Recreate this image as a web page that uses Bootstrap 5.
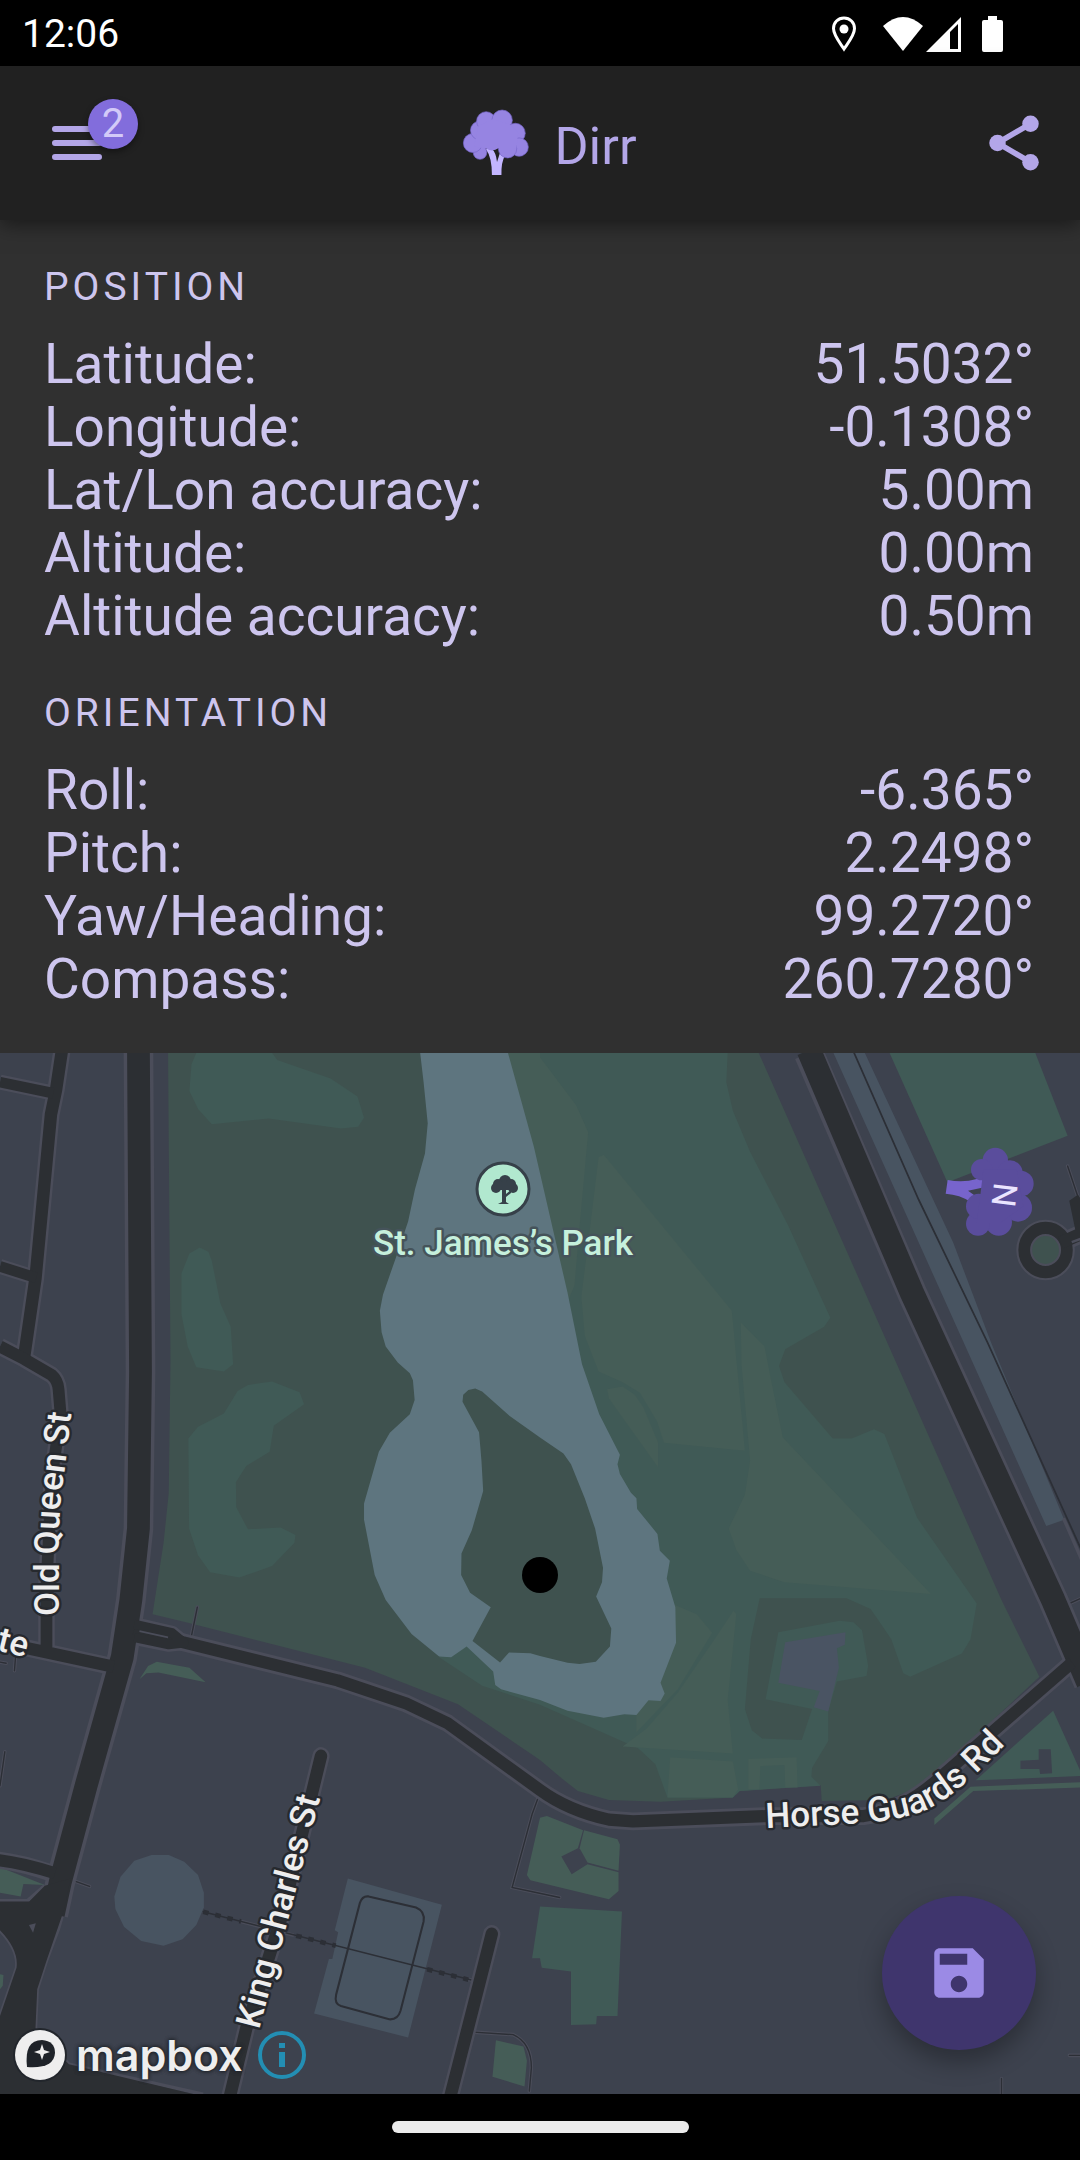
<!DOCTYPE html>
<html lang="en">
<head>
<meta charset="utf-8">
<meta name="viewport" content="width=device-width, initial-scale=1">
<title>Dirr</title>
<link href="https://cdn.jsdelivr.net/npm/bootstrap@5.3.0/dist/css/bootstrap.min.css" rel="stylesheet">
<style>
  body { background: #303030; color: #cdc5ee; font-family: Roboto, "Liberation Sans", sans-serif; }
  .status-strip { height: 66px; padding: 2px 76px 0 22px; background: #000; color: #fff; font-size: 39px; line-height: 48px; }
  .app-bar { height: 154px; padding: 0 33px 0 44px; background: #212121; box-shadow: 0 4px 20px rgba(0,0,0,.5); z-index: 2; }
  .bar-btn { width: 66px; height: 66px; color: #b3a6e8; border: 0; background: none; }
  .brand-name { font-size: 52px; line-height: 56px; color: #b3a6e8; }
  .count-badge { left: 44px; top: -11px; width: 50px; height: 50px; border-radius: 50%; background: #826ddc; color: #d3caf8; font-size: 40px; line-height: 50px; box-shadow: 0 3px 6px rgba(0,0,0,.4); }
  .readout { padding: 44px 46px 42px 44px; }
  .readout h2 { font-size: 39px; line-height: 46px; font-weight: 400; letter-spacing: 4px; margin: 0 0 23px; text-transform: uppercase; }
  .readout dl { font-size: 55px; line-height: 63px; margin: 0; }
  .readout dl + h2 { margin-top: 42px; }
  .readout dt { font-weight: 400; }
  .map-area { min-height: 600px; background: #3d424e; }
  .map-svg { position: absolute; inset: 0; width: 100%; height: 100%; }
  .compass-btn { top: 90px; right: 40px; width: 100px; height: 100px; border: 0; background: none; }
  .save-btn { right: 44px; bottom: 44px; width: 154px; height: 154px; border: 0; border-radius: 50%; background: #3f356d; color: #9b8ae5; box-shadow: 0 12px 24px rgba(0,0,0,.3); }
  .map-credit { left: 12px; bottom: 11px; gap: 14px; }
  .credit-link { color: #eee; font: 600 43px/56px Inter, sans-serif; text-shadow: 0 0 4px #22262c, 0 0 4px #22262c, 0 0 3px #22262c; }
  .home-strip { height: 66px; background: #000; }
  .home-pill { width: 297px; height: 12px; border-radius: 6px; background: #ebebeb; }
  .casing path { stroke: #4b4d5a; fill: none; stroke-linejoin: round; }
  .asphalt path { stroke: #2c2f33; fill: none; stroke-linejoin: round; }
  .street-name { font: 500 35px Roboto, sans-serif; fill: #eee; stroke: #26292e; stroke-width: 5px; paint-order: stroke; stroke-linejoin: round; }
  .park-name { fill: #c6f0dc; stroke: #45535a; }
</style>
<script src="https://cdn.jsdelivr.net/npm/bootstrap@5.3.0/dist/js/bootstrap.bundle.min.js" defer></script>
</head>
<body>
<div class="d-flex flex-column min-vh-100">

  <div class="status-strip d-flex align-items-center justify-content-between">
    <span>12:06</span>
    <span class="d-flex align-items-center">
      <svg width="26" height="36" viewBox="0 0 26 36" aria-hidden="true"><path d="M13 2C7 2 2.500 6.500 2.500 12.500C2.500 19 8 25.500 13 33C18 25.500 23.500 19 23.500 12.500C23.500 6.500 19 2 13 2Z" fill="none" stroke="#fff" stroke-width="3"/><circle cx="13" cy="13" r="4.500" fill="#fff"/></svg>
      <svg class="ms-4" width="44" height="36" viewBox="0 0 44 36" aria-hidden="true"><path d="M2 10Q22-8 42 10L22 35Z" fill="#fff"/></svg>
      <svg width="38" height="36" viewBox="0 0 38 36" aria-hidden="true"><path fill="#fff" fill-rule="evenodd" d="M1 36L36 1V36ZM25 16V33H33V8Z"/></svg>
      <svg class="ms-3" width="25" height="38" viewBox="0 0 25 38" aria-hidden="true"><path fill="#fff" d="M9 1H18V5H22Q24 5 24 7V35Q24 37 22 37H5Q3 37 3 35V7Q3 5 5 5H9Z"/></svg>
    </span>
  </div>

  <header class="app-bar d-flex align-items-center justify-content-between position-relative">
    <button type="button" class="bar-btn p-0 position-relative" aria-label="Menu">
      <svg width="66" height="66" viewBox="0 0 66 66" aria-hidden="true"><path d="M11 19H55M11 33H55M11 47H55" stroke="currentColor" stroke-width="6" stroke-linecap="round"/></svg>
      <span class="count-badge position-absolute text-center">2</span>
    </button>
    <div class="d-flex align-items-center gap-4 ps-2">
      <svg width="68" height="68" viewBox="1350 330 200 200" aria-hidden="true">
        <path fill="#c3b5ff" d="M1420 448Q1438 472 1438 524H1466Q1465 486 1476 468L1462 458L1453 486Q1450 456 1436 446Z"/>
        <g fill="#9684e2" stroke="#7665c8" stroke-width="2"><circle cx="1403" cy="458" r="20"/><circle cx="1382" cy="430" r="28"/><circle cx="1403" cy="393" r="28"/><circle cx="1421" cy="366" r="28"/><circle cx="1468" cy="363" r="30"/><circle cx="1507" cy="401" r="29"/><circle cx="1518" cy="442" r="27"/><circle cx="1484" cy="447" r="27"/></g>
        <path fill="#9684e2" d="M1398 380L1440 360L1490 375L1515 400L1510 445L1475 458L1458 445Q1440 458 1422 447L1385 440Z"/>
      </svg>
      <span class="brand-name pt-2">Dirr</span>
    </div>
    <button type="button" class="bar-btn p-0" aria-label="Share">
      <svg width="66" height="66" viewBox="0 0 24 24" aria-hidden="true"><path d="M18 5L6 12L18 19" fill="none" stroke="currentColor" stroke-width="2"/><g fill="currentColor"><circle cx="18" cy="5" r="3"/><circle cx="6" cy="12" r="3"/><circle cx="18" cy="19" r="3"/></g></svg>
    </button>
  </header>

  <section class="readout">
    <h2>Position</h2>
    <dl>
      <div class="d-flex justify-content-between"><dt>Latitude:</dt><dd class="m-0">51.5032°</dd></div>
      <div class="d-flex justify-content-between"><dt>Longitude:</dt><dd class="m-0">-0.1308°</dd></div>
      <div class="d-flex justify-content-between"><dt>Lat/Lon accuracy:</dt><dd class="m-0">5.00m</dd></div>
      <div class="d-flex justify-content-between"><dt>Altitude:</dt><dd class="m-0">0.00m</dd></div>
      <div class="d-flex justify-content-between"><dt>Altitude accuracy:</dt><dd class="m-0">0.50m</dd></div>
    </dl>
    <h2>Orientation</h2>
    <dl>
      <div class="d-flex justify-content-between"><dt>Roll:</dt><dd class="m-0">-6.365°</dd></div>
      <div class="d-flex justify-content-between"><dt>Pitch:</dt><dd class="m-0">2.2498°</dd></div>
      <div class="d-flex justify-content-between"><dt>Yaw/Heading:</dt><dd class="m-0">99.2720°</dd></div>
      <div class="d-flex justify-content-between"><dt>Compass:</dt><dd class="m-0">260.7280°</dd></div>
    </dl>
  </section>

  <main class="map-area flex-grow-1 position-relative overflow-hidden">
    <svg class="map-svg" viewBox="0 1053 1080 1041" preserveAspectRatio="xMidYMid slice" role="img" aria-label="Map of St. James's Park">
      <g transform="translate(0 1050) scale(.34439 .35714)">
        <!-- park ground -->
        <path fill="#3f524f" d="M488 8L495 870L490 1240L475 1380L443 1580L540 1602L1060 1730L1330 1832L1568 1988L1638 2045L1678 2075L1768 2100L1918 2105L2128 2093L2148 2075L2383 2058L2386 2103L2570 2100L2658 2070L2768 1980L3018 1755L2908 1540L2203 8Z"/>
        <!-- woodland -->
        <g fill="#405a56">
          <path d="M570 8H790L805 28L960 80L1038 130L1057 190L1040 215L990 220L780 192L615 208L575 165L550 115L556 40Z"/>
          <path d="M580 553L605 565L615 590L640 710L670 775L677 880L650 900L570 888L545 830L527 740V625L550 570Z"/>
          <path d="M720 938L790 928L870 958L883 992L795 1052L783 1125L715 1165L685 1210L686 1280L720 1342L815 1337L858 1358L855 1380L790 1445L695 1477L610 1462L575 1415L549 1340L547 1088L575 1055L650 1018L690 955Z"/>
          <path d="M1475 8H2113L2109 90L2128 170L2178 285L2288 490L2411 750L2393 775L2280 838L2262 885L2278 930L2418 1088H2473L2538 1062L2568 1075L2663 1310L2836 1550L2818 1650L2793 1690L2643 1755L2623 1745L2588 1650L2553 1600L2528 1565L2458 1535H2206L2180 1650L2163 1845L2183 1905L2213 1928L2328 1932L2358 1845L2223 1818L2260 1630L2438 1598L2478 1602L2503 1625L2521 1725L2516 1753L2430 1768L2405 1850V1935L2358 2010L2356 2035L2383 2060L2148 2075L2128 2093H1938L1903 2000L1853 1955L1568 1833L1400 1780L1275 1700L1600 1400Z"/>
          <path d="M2583 8H3006L3100 240L2751 370Z"/>
          <path d="M3058 1850L3140 2025V2033L2833 2045Z"/>
          <path d="M1568 2398L1806 2412L1793 2705H1733L1731 2728L1658 2730V2580L1573 2570L1568 2543H1545Z"/>
        </g>
        <!-- grass -->
        <g fill="#455d57">
          <path d="M1475 8H1568V20L1673 155L1708 230L1688 440L1668 660L1650 700L1568 500Z"/>
          <path d="M1738 300L1753 293L1938 510L2125 730L2163 1122L1928 1100L1908 1040L1858 960L1808 930L1738 900L1698 800L1688 690L1713 500Z"/>
          <path d="M2151 763L2220 830L2238 920L2273 1085L2703 1523L2278 1490L2178 1458L2138 1400L2116 1340L2163 1245L2178 1150L2153 880Z"/>
          <path d="M1763 950L1808 942L1843 965L1868 1000L1911 1100V1168L1808 1030L1768 975Z"/>
          <path d="M1950 1550L2023 1580L2068 1632L1968 1790L1848 1910V1860Z"/>
          <path d="M2130 1570L2138 1580L2113 1820L2128 1970L1808 1950L1878 1900L1968 1800L2068 1660Z"/>
          <path d="M1946 1980L2128 1992L2143 2070L2128 2093H1938Z"/>
          <path d="M2173 1985L2313 1980L2316 2065H2280L2278 2002L2208 2005L2205 2070H2173Z"/>
          <path d="M1530 2310L1568 2150L1588 2145L1693 2185L1678 2235L1630 2258L1660 2308L1706 2280L1796 2302V2355L1768 2378L1540 2325Z"/>
          <path d="M1696 2185L1793 2210L1800 2225L1796 2298L1706 2275L1683 2235Z"/>
          <path d="M1440 2773L1520 2790L1530 2830L1523 2902L1430 2875Z"/>
          <path d="M0 2288L130 2338L68 2335L60 2370L0 2360ZM0 2588L10 2590L8 2620L0 2630Z"/>
          <path d="M405 1762L430 1725L455 1713L550 1730L597 1770L460 1743L425 1745Z"/>
          <path d="M3140 2050V2065L2826 2075L2713 2170V2152L2818 2063Z"/>
        </g>
        <!-- buildings and paved ground -->
        <path fill="#4a5463" d="M2280 1658L2455 1630L2453 1665L2430 1675L2436 1730L2405 1852L2363 1840L2380 1795L2260 1772Z"/>
        <path fill="#3d424e" d="M2963 1990L3016 1987V1958L3051 1958L3055 2025L3020 2027L3018 2013H2963Z"/>
        <g fill="#485461">
          <path d="M2420 8H2511L2768 540L2878 820L3090 1315L3038 1333Z"/>
          <path d="M440 2254H490L535 2273L575 2310L592 2360V2400L570 2450L530 2490L475 2508L410 2495L360 2455L335 2405L332 2370L350 2315L390 2270Z"/>
          <path d="M1010 2320L1283 2393L1185 2765L912 2698L955 2545H965L982 2470L972 2465Z"/>
        </g>
        <!-- lake -->
        <path fill="#5e757f" d="M1220 8L1230 90L1242 205L1234 290L1205 390L1185 480L1150 580L1112 685L1103 730L1108 790L1120 830L1155 875L1190 905L1199 925L1204 980L1190 1020L1132 1072L1100 1125L1057 1270V1315L1088 1470L1120 1540L1195 1635L1275 1698L1310 1700L1355 1670L1432 1740L1438 1778L1455 1790L1568 1820L1648 1850L1753 1870L1813 1860L1848 1862L1883 1821L1918 1823L1930 1802L1918 1772L1963 1660L1961 1560L1936 1480L1945 1430L1916 1402L1909 1355L1850 1285L1848 1255L1832 1240L1800 1187L1793 1160L1800 1133L1740 1020L1690 880L1648 680L1568 345L1550 270L1475 8Z"/>
        <!-- island -->
        <path fill="#3f524f" d="M1343 985L1345 965L1360 952L1380 948L1400 956L1480 1025L1568 1085L1636 1130L1658 1160L1698 1255L1728 1340L1751 1450L1748 1490L1731 1530L1775 1620L1771 1670L1730 1713L1683 1719L1648 1716L1568 1697L1540 1689L1478 1687L1452 1715L1372 1655L1425 1560L1365 1520L1339 1470L1340 1410L1370 1345L1403 1235L1398 1150L1391 1070Z"/>
        <!-- footpaths -->
        <g fill="none" stroke="#4b4d5a" stroke-width="10" stroke-linecap="round">
          <path d="M573 1560L555 1645M205 2323L260 2342M14 1965L0 2060M0 1714L18 1717M45 1700L42 1738M1562 2095L1545 2140L1487 2345L1625 2373M1375 2750L1490 2757Q1543 2780 1543 2850L1537 2915M3100 325L3140 440M2908 2880V2930M3105 2815H3140M3100 1552L3140 1535M700 2440L850 2478M1350 2600L1380 2607M3090 1315L3140 1425"/>
        </g>
        <g fill="none" stroke="#2c2f36" stroke-width="4" stroke-linecap="round">
          <path d="M573 1560L555 1645M205 2323L260 2342M14 1965L0 2060M0 1714L18 1717M45 1700L42 1738M1562 2095L1545 2140L1487 2345L1625 2373M1375 2750L1490 2757Q1543 2780 1543 2850L1537 2915M3100 325L3140 440M2908 2880V2930M3105 2815H3140M3100 1552L3140 1535M590 2413L1380 2607"/>
          <path d="M2480 8L2668 420L2868 820L3140 1400" stroke-width="5"/>
          <path stroke-width="6" d="M1070 2370L1208 2401Q1235 2412 1230 2440L1163 2690Q1155 2716 1130 2714L990 2677Q970 2670 976 2645L1045 2388Q1052 2368 1070 2370Z"/>
        </g>
        <path d="M590 2413L700 2440M860 2480L975 2508M1240 2574L1360 2603" fill="none" stroke="#2c2f36" stroke-width="13" stroke-dasharray="16 20"/>
        <!-- roads: light casing first, asphalt over it -->
        <g class="casing">
          <path stroke-width="86" d="M402 0L408 900L402 1340L380 1540L355 1700L250 2060L175 2330L155 2420"/>
          <path stroke-width="86" d="M2348 8L2648 680L3058 1540L3160 1770"/>
          <path stroke-width="50" d="M400 1625L530 1658L980 1765L1180 1830L1300 1885L1568 2072Q1650 2130 1768 2155L1838 2160L2228 2145L2508 2145Q2620 2130 2720 2045L3113 1715"/>
          <path stroke-width="40" d="M400 1610L500 1632L535 1660L490 1665L400 1648"/>
          <path stroke-width="50" d="M180 0L163 110L148 180L103 640L70 860"/>
          <path stroke-width="42" d="M0 90L155 121M0 606L105 638"/>
          <path stroke-width="48" d="M0 830L70 865L150 910Q168 925 170 950L176 1020L150 1200L135 1500V1680M-10 1650L80 1675L320 1725M-10 2268Q60 2275 150 2305"/>
          <path stroke-width="50" stroke-linecap="round" d="M932 1977L820 2420L715 2740L665 2940M1428 2475L1390 2620L1305 2940"/>
          <path stroke-width="10" d="M0 2382H80L130 2340M0 2465Q55 2520 48 2570L0 2705M185 2410L170 2460L135 2550L108 2630L103 2740L200 2840L590 2924"/>
        </g>
        <circle cx="3036" cy="560" r="62" fill="#3f524f" stroke="#4b4d5a" stroke-width="46"/>
        <path d="M3080 540L3150 510" stroke="#4b4d5a" stroke-width="52"/>
        <g class="asphalt">
          <path stroke-width="66" d="M402 0L408 900L402 1340L380 1540L355 1700L250 2060L175 2330L155 2420"/>
          <path stroke-width="70" d="M2348 0L2648 680L3058 1540L3160 1770"/>
          <path stroke-width="34" d="M390 1620L530 1658L980 1765L1180 1830L1300 1885L1568 2072Q1650 2130 1768 2155L1838 2160L2228 2145L2508 2145Q2620 2130 2720 2045L3113 1715"/>
          <path stroke-width="26" d="M390 1608L500 1632L535 1660L490 1665L390 1645"/>
          <path stroke-width="36" d="M180 0L163 110L148 180L103 640L70 860"/>
          <path stroke-width="30" d="M0 90L155 121M0 606L105 638"/>
          <path stroke-width="34" d="M0 830L70 865L150 910Q168 925 170 950L176 1020L150 1200L135 1500V1680M-10 1650L80 1675L330 1727M-10 2268Q60 2275 160 2305"/>
          <path stroke-width="36" stroke-linecap="round" d="M932 1977L820 2420L715 2740L665 2940M1428 2475L1390 2620L1305 2940"/>
        </g>
        <path fill="#2c2f33" d="M130 2340L205 2320L185 2410L135 2550L108 2630L103 2740L200 2840L590 2930H0V2705L48 2570Q55 2520 0 2465V2384H85Z"/>
        <path fill="#4b4d5a" d="M84 2450L104 2445L96 2472Z"/>
        <path d="M405 1627L488 1645" stroke="#4b4d5a" stroke-width="5"/>
        <circle cx="3036" cy="560" r="62" fill="none" stroke="#2c2f33" stroke-width="34"/>
        <path d="M3080 540L3150 510M3140 420L3125 430L3140 500" fill="none" stroke="#2c2f33" stroke-width="36"/>
        <path d="M3112 538L3140 528" stroke="#4b4d5a" stroke-width="7"/>
      </g>

      <!-- street names follow their roads -->
      <defs>
        <path id="queen" d="M59 1616V1530Q60 1500 64 1475L73 1400"/>
        <path id="charles" d="M259 2030L325 1780"/>
        <path id="guards" d="M766 1828L868 1823Q920 1817 942 1801Q965 1785 985 1765L1030 1720"/>
        <path id="gate" d="M-4 1650L60 1666"/>
      </defs>
      <text class="street-name"><textPath href="#queen">Old Queen St</textPath></text>
      <text class="street-name"><textPath href="#charles">King Charles St</textPath></text>
      <text class="street-name"><textPath href="#guards">Horse Guards Rd</textPath></text>
      <text class="street-name"><textPath href="#gate">te</textPath></text>
      <text class="street-name park-name" x="503" y="1255" text-anchor="middle">St. James’s Park</text>

      <!-- park pin -->
      <circle cx="503" cy="1189" r="26" fill="#b1e8cf" stroke="#364049" stroke-width="3"/>
      <g fill="#364049"><circle cx="505" cy="1181" r="6"/><circle cx="498" cy="1184" r="5"/><circle cx="511" cy="1184" r="5"/><circle cx="496" cy="1188" r="5"/><circle cx="513" cy="1188" r="5"/><path d="M497 1183H512V1190H497ZM502 1188H506V1194L511 1190V1193L506 1197V1202L509 1204H498L502 1202Z"/></g>
      <!-- current position -->
      <circle cx="540" cy="1575" r="18" fill="#000"/>
    </svg>

    <button type="button" class="compass-btn position-absolute p-0" aria-label="North">
      <svg class="d-block" width="100" height="100" viewBox="60 70 300 300">
        <path fill="#7764cc" d="M83 181Q130 190 170 178L192 176L186 204L144 213L162 226L152 247Q120 225 77 222Z"/>
        <g fill="#5a4d9c"><circle cx="226" cy="122" r="38"/><circle cx="185" cy="150" r="32"/><circle cx="270" cy="160" r="38"/><circle cx="302" cy="192" r="39"/><circle cx="294" cy="264" r="42"/><circle cx="236" cy="308" r="40"/><circle cx="174" cy="312" r="36"/><circle cx="176" cy="260" r="38"/><path d="M190 150H290L310 260L240 310H170L180 235Z"/></g>
        <text x="253" y="261" font-family="Roboto, sans-serif" font-size="100" fill="#eae4ff" text-anchor="middle" transform="rotate(97 253 226)">N</text>
      </svg>
    </button>

    <div class="map-credit position-absolute d-flex align-items-center">
      <a href="#" class="credit-link d-flex align-items-center gap-2 text-decoration-none">
        <svg width="56" height="56" viewBox="0 0 56 56" aria-hidden="true"><circle cx="28" cy="28" r="27" fill="#22262c"/><circle cx="28" cy="28" r="25" fill="#eee"/><path fill="#1f2329" d="M15 40Q12 13 30 13Q43 14 43 26Q42 42 15 40Z"/><path fill="#eee" d="M30 17L32 23L38 25L32 27L30 33L28 27L22 25L28 23Z"/></svg>
        <span>mapbox</span>
      </a>
      <a href="#" aria-label="Map information">
        <svg class="d-block" width="50" height="50" viewBox="0 0 50 50"><circle cx="25" cy="25" r="22" fill="none" stroke="#238eb3" stroke-width="4"/><path fill="#238eb3" d="M22 13H28V18H22ZM22 22H28V37H22Z"/></svg>
      </a>
    </div>

    <button type="button" class="save-btn position-absolute d-flex align-items-center justify-content-center p-0" aria-label="Save">
      <svg width="66" height="66" viewBox="0 0 24 24" aria-hidden="true"><path fill="currentColor" d="M17 3H5c-1.110 0-2 .9-2 2v14c0 1.100.89 2 2 2h14c1.100 0 2-.9 2-2V7l-4-4zm-5 16c-1.660 0-3-1.340-3-3s1.340-3 3-3 3 1.340 3 3-1.340 3-3 3zm3-10H5V5h10v4z"/></svg>
    </button>
  </main>

  <div class="home-strip d-flex align-items-center justify-content-center"><div class="home-pill"></div></div>
</div>
</body>
</html>
